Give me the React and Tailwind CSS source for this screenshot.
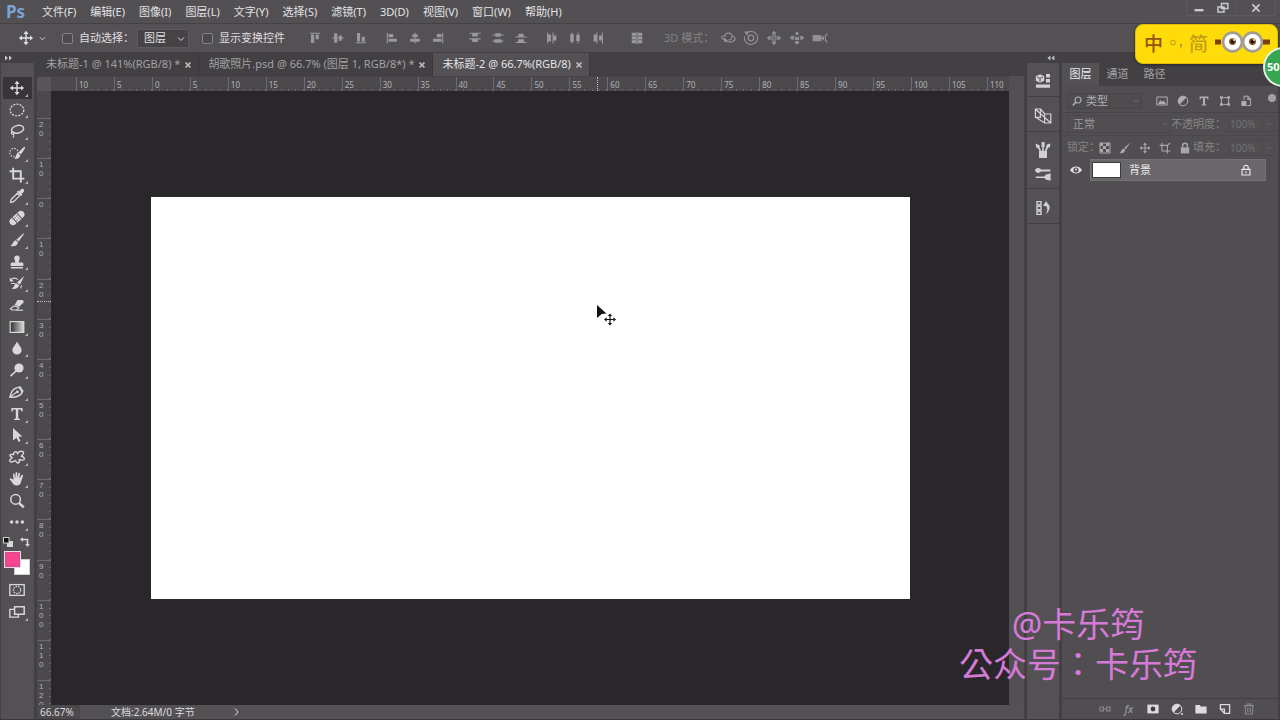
import React from "react";

const font = "font-['Noto_Sans','Noto_Sans_CJK_SC',sans-serif]";

function Svg({ className = "size-4", box = "0 0 16 16", children }) {
  return (
    <svg viewBox={box} className={"shrink-0 " + className} fill="currentColor" aria-hidden="true">
      {children}
    </svg>
  );
}

function Line({ d, w = 1.2, dash }) {
  return <path d={d} fill="none" stroke="currentColor" strokeWidth={w} strokeDasharray={dash} strokeLinecap="butt" />;
}

function MoveGlyph() {
  return (
    <>
      <path d="M8 .8 10.6 4H5.4zM8 15.2 5.4 12h5.2zM.8 8 4 5.4v5.2zM15.2 8 12 10.6V5.4z" />
      <path d="M7.3 3h1.4v10H7.3zM3 7.3h10v1.4H3z" />
    </>
  );
}

function Chevron({ className = "size-2" }) {
  return (
    <Svg className={className} box="0 0 8 8">
      <Line d="M1 2.5 4 5.5 7 2.5" w={1} />
    </Svg>
  );
}

const tools = [
  ["移动工具", <MoveGlyph />],
  ["椭圆选框工具", <ellipse cx="8" cy="8" rx="6.8" ry="5.8" fill="none" stroke="currentColor" strokeWidth="1.3" strokeDasharray="2 1.2" />],
  ["套索工具", <>
    <ellipse cx="8.6" cy="6.3" rx="6.2" ry="3.8" transform="rotate(-14 8.6 6.3)" fill="none" stroke="currentColor" strokeWidth="1.4" />
    <Line d="M3.5 9C1.8 9 2 11.4 4 11.2S5.8 8.6 4 8.8M4 11C5.5 12.5 4.5 14 3.8 14.6" w={1.1} />
  </>],
  ["快速选择工具", <>
    <circle cx="5" cy="7.6" r="4.2" fill="none" stroke="currentColor" strokeWidth="1.1" strokeDasharray="1.6 1.2" />
    <path d="M15.4 1.6 16.2 3.2 11.8 9.6 9.4 7.6zM8.8 8l2.6 2.2c-.6 3-3.4 4-6.2 3.6 2-.9 1.4-4.4 3.6-5.8z" />
  </>],
  ["裁剪工具", <Line d="M4.2.8V11.6H15.4M.6 4.2H11.8V15.4" w={1.9} />],
  ["吸管工具", <>
    <path d="M10 3.4 12.2 1.2C14-.3 16.2 2 14.8 3.8L12.6 6l.9.9-1.2 1.2L7.9 3.7l1.2-1.2z" />
    <path d="M8.4 5.2 10.8 7.6 4.6 13.6 2 14.6 1.4 14 2.4 11.2z" fill="none" stroke="currentColor" strokeWidth="1.3" />
  </>],
  ["污点修复画笔工具", <g transform="rotate(-42 8 8)">
    <path d="M2.8 4.4h1.6v7.2H2.8A3.6 3.6 0 0 1 2.8 4.4zM13.2 4.4h-1.6v7.2h1.6a3.6 3.6 0 0 0 0-7.2zM5 4.4h6v7.2H5z" />
    <path d="M6.2 6h1v1h-1zM8.8 6h1v1h-1zM6.2 9h1v1h-1zM8.8 9h1v1h-1z" fill="#535154" />
    <path d="M4.6 4.4h.6v7.2h-.6zM10.8 4.4h.6v7.2h-.6z" fill="#535154" />
  </g>],
  ["画笔工具", <path d="M14.6 1.2 15 2 9.6 9.6 7.3 7.7zM6.6 8.3 9 10.3c-.4 3.2-3.7 4.6-7.6 3.6C4 12.9 3.4 9.4 6.6 8.3z" />],
  ["仿制图章工具", <path d="M8 1.4a2.8 2.8 0 0 1 2.4 4.2L9.6 8.4h3.8l1 1V12H1.6V9.4l1-1h3.8l-.8-2.8A2.8 2.8 0 0 1 8 1.4zM2 13h12v1.4H2z" />],
  ["历史记录画笔工具", <>
    <path d="M15.2 1 11 9.8 8 7.6zM7.4 8.2l2.8 2c-.8 2.8-3.6 4.4-7.4 3.6C5.2 12.6 5 9 7.4 8.2z" />
    <Line d="M1.4 5.4C3.4 2.6 6.6 2.4 9 4.6M2.2 8.5H6.4M12.6 10.4 11.8 13.4" w={1.1} />
    <path d="M.8 2.6v4h4z" />
  </>],
  ["橡皮擦工具", <>
    <path d="M8.6 3 13.6 3 15 5 10.6 9.6 5.6 8z" />
    <path d="M5 8.8 9.8 10.4 7.8 13H3L1.4 11.8z" fill="none" stroke="currentColor" strokeWidth="1.2" />
    <Line d="M7.6 13.2H14" w={1.2} />
  </>],
  ["渐变工具", <>
    <defs><linearGradient id="toolGradient"><stop stopColor="#2c2b2d" /><stop offset="1" stopColor="#dddddd" /></linearGradient></defs>
    <rect x="1.2" y="2.6" width="13.6" height="10.8" fill="url(#toolGradient)" stroke="currentColor" strokeWidth="1.2" />
  </>],
  ["模糊工具", <path d="M8 1.6C9.6 5 12.6 7.2 12.6 10.2a4.6 4.4 0 0 1-9.2 0C3.4 7.2 6.6 5 8 1.6z" />],
  ["减淡工具", <><circle cx="10" cy="6" r="4.6" /><Line d="M7 9 1.6 14.2" w={1.7} /></>],
  ["钢笔工具", <g transform="rotate(8 8 8)">
    <path d="M1.6 14C1.8 8.6 4.6 3.8 10.4 2.6L13.6 6.2C12.6 11.6 7 14 1.6 14z" fill="none" stroke="currentColor" strokeWidth="1.5" />
    <Line d="M2 13.6 7.6 8.4M9.2 3.2 13 7.2" /><circle cx="8.4" cy="7.8" r="1.4" />
  </g>],
  ["横排文字工具", <path d="M2.4 2h11.2v3.4h-1.2L11.8 3.6H9.2v8.8l1.8.6V14H5v-1l1.8-.6V3.6H4.2L3.6 5.4H2.4z" />],
  ["路径选择工具", <path d="M4 1 13.4 9.4 9.4 9.8 11.6 14 9.6 15 7.6 10.8 4 13.6z" />],
  ["自定形状工具", <path d="M4.6 5.6C4.2 2.6 7.4 1.8 8.6 4.4 10 2 14.6 1.2 14.6 4 14.6 5.8 12.6 6 12.4 7.2c2.4.4 3.4 2.4 2.6 3.4-1.2 1.4-3.2-.2-4.8.2.6 1.8-.2 3.4-1.6 3.2-1.2-.2-1.4-2-2.4-2.4-1.4.8-4.6 2.2-5.4.6-.8-1.8 2-2.4 2.4-3.6C2 8 .6 7.2 1 6c.6-1.4 2.6-.2 3.6-.4z" fill="none" stroke="currentColor" strokeWidth="1.4" />],
  ["抓手工具", <path d="M4.6 8.4 4 3.6c-.2-1.2 1.4-1.4 1.6-.2L6.4 7 6.6 1.8c0-1.2 1.6-1.2 1.6 0L8.4 7l.9-4.6c.2-1.1 1.7-.9 1.6.3L10.5 7.4l2-3.2c.6-.9 1.9-.3 1.5.7L12.2 10.6c-.6 2.8-1.8 4-4.4 4-2.8 0-3.8-1.6-5-3.6L.8 8.6c-.6-1.2.8-1.8 1.6-.9z" />],
  ["缩放工具", <><circle cx="6.6" cy="6.4" r="4.8" fill="none" stroke="currentColor" strokeWidth="1.5" /><Line d="M10 10 14.8 14.4" w={2.4} /></>],
  ["编辑工具栏", <><circle cx="2.6" cy="8" r="1.7" /><circle cx="8" cy="8" r="1.7" /><circle cx="13.4" cy="8" r="1.7" /></>],
];
const noFlyout = ["橡皮擦工具", "缩放工具"];

function Corner() {
  return <span className="absolute right-1 bottom-0.5 size-0 border-l-3 border-b-3 border-l-transparent border-b-[#b5b3b6]" />;
}

function Toolbox() {
  return (
    <aside className="flex w-[37px] shrink-0 flex-col border-r-3 border-l border-[#424043] bg-[#424043]">
      <div className="flex h-[10px] items-center pl-1 text-[#c8c6c9]">
        <Svg className="h-1.5 w-2" box="0 0 8 6"><path d="M0 0.6 3 3 0 5.4zM4 .6 7 3 4 5.4z" /></Svg>
      </div>
      <div className="flex flex-1 flex-col bg-[#535154] pt-[14px] text-[#d9d7da]">
        <div className="flex h-[456px] flex-col">
          {tools.map(([name, art], i) => (
            <button
              key={name}
              aria-label={name}
              className={
                "relative mx-[2px] flex flex-1 items-center justify-center pr-px " +
                (i === 0 ? "bg-[#373538]" : "")
              }
            >
              <Svg>{art}</Svg>
              {!noFlyout.includes(name) && <Corner />}
            </button>
          ))}
        </div>
        <div className="flex h-[18px] items-center justify-between pr-1 pl-0.5">
          <button aria-label="默认前景色和背景色">
            <Svg className="size-2.5" box="0 0 10 10">
              <path d="M4 4h6v6H4z" /><rect x=".5" y=".5" width="5.5" height="5.5" fill="#111" stroke="#ccc" strokeWidth="1" />
            </Svg>
          </button>
          <button aria-label="切换前景色和背景色">
            <Svg className="size-2.5" box="0 0 10 10">
              <Line d="M2.5 2.5H7.5V7.5" w={1.6} /><path d="M0 2.5 3 .2v4.6zM7.5 10 5.2 7h4.6z" />
            </Svg>
          </button>
        </div>
        <div className="relative ml-[3px] h-6 w-[26px]">
          <button aria-label="背景色" className="absolute right-0 bottom-0 size-4 border border-[#cfcdd0] bg-white" />
          <button aria-label="前景色" className="absolute top-0 left-0 size-[17px] border border-[#efdce6] bg-[#f5468f] outline-1 -outline-offset-2 outline-[#d84c8a]" />
        </div>
        <button aria-label="以快速蒙版模式编辑" className="mt-1 flex h-[22px] items-center justify-center pr-px">
          <Svg>
            <rect x=".8" y="2.6" width="14.4" height="10.8" fill="none" stroke="currentColor" strokeWidth="1.3" />
            <circle cx="8" cy="8" r="3.6" fill="none" stroke="currentColor" strokeWidth="1.2" strokeDasharray="1.6 .9" />
          </Svg>
        </button>
        <button aria-label="更改屏幕模式" className="relative mx-[2px] flex h-[22px] items-center justify-center pr-px">
          <Svg>
            <path d="M.8 5.4h8.6v7.8H.8z" fill="none" stroke="currentColor" strokeWidth="1.3" />
            <path d="M5.6 2.8h9.6v7.4H5.6z" fill="#535154" stroke="currentColor" strokeWidth="1.5" />
          </Svg>
          <Corner />
        </button>
      </div>
    </aside>
  );
}

const menus = ["文件(F)", "编辑(E)", "图像(I)", "图层(L)", "文字(Y)", "选择(S)", "滤镜(T)", "3D(D)", "视图(V)", "窗口(W)", "帮助(H)"];

function MenuBar() {
  return (
    <header className="flex h-6 shrink-0 items-center border-b border-[#444245] bg-[#525053] pl-[6px]">
      <span className="w-9 text-[17px] leading-6 font-bold text-[#7ba3d4]">Ps</span>
      <nav className="flex flex-1 gap-[14px]">
        {menus.map((m) => (
          <button key={m} className="text-[11px] leading-4 whitespace-nowrap text-[#e4e2e5]">{m}</button>
        ))}
      </nav>
      <div className="mr-1 flex h-4 items-center self-start border border-t-0 border-[#5c5a5d] text-[#c9c7ca]">
        <button aria-label="最小化" className="flex w-6 justify-center pt-1"><Svg className="size-3" box="0 0 12 12"><path d="M1.5 5h9v2.4h-9z" /></Svg></button>
        <button aria-label="还原" className="flex w-6 justify-center"><Svg className="size-3" box="0 0 12 12"><path d="M4.5 1.5h6.4v5H4.5zM1 5h6v5H1z" fill="none" stroke="currentColor" strokeWidth="1.5" /></Svg></button>
        <button aria-label="关闭" className="flex w-10 justify-center border-l border-[#5c5a5d]"><Svg className="size-3" box="0 0 12 12"><Line d="M2.4 2.4 9.6 9.6M9.6 2.4 2.4 9.6" w={1.8} /></Svg></button>
      </div>
    </header>
  );
}

const alignGroups = [
  [
    ["顶对齐", <path d="M2 2h12v1.2H2zM3.4 4h3.6v9.6H3.4zM8.8 4h3.6v5.4H8.8z" />],
    ["垂直居中对齐", <path d="M1.4 7.4h13.2v1.2H1.4zM3.6 2.6h3.6v10.8H3.6zM9 5h3.4v6H9z" />],
    ["底对齐", <path d="M2 12.8h12V14H2zM3.4 2.4h3.6V12H3.4zM8.8 6.6h3.6V12H8.8z" />],
  ],
  [
    ["左对齐", <path d="M2 2h1.2v12H2zM4 3.4h5.4V7H4zM4 8.8h9.6v3.6H4z" />],
    ["水平居中对齐", <path d="M7.4 1.6h1.2v12.8H7.4zM5 3.6h6V7H5zM2.6 8.8h10.8v3.6H2.6z" />],
    ["右对齐", <path d="M12.8 2H14v12h-1.2zM6.6 3.4H12V7H6.6zM2.4 8.8H12v3.6H2.4z" />],
  ],
  [
    ["按顶分布", <path d="M1.6 2h12.8v1.2H1.6zM4.8 3.2h6.4v3H4.8zM1.6 8.4h12.8v1.2H1.6zM4.8 9.6h6.4v3H4.8z" />],
    ["垂直居中分布", <path d="M1.6 4h12.8v1.2H1.6zM5 2.6h6v4H5zM1.6 10.8h12.8V12H1.6zM4 9.4h8v4H4z" />],
    ["按底分布", <path d="M1.6 6.2h12.8v1.2H1.6zM5 3.2h6v3H5zM1.6 12.6h12.8v1.2H1.6zM4.6 9.4h6.8v3.2H4.6z" />],
  ],
  [
    ["按左分布", <path d="M2.4 1.8h1.2v12.4H2.4zM3.6 4h3.2v8H3.6zM8.6 1.8h1.2v12.4H8.6zM9.8 5.2H13v5.6H9.8z" />],
    ["水平居中分布", <path d="M4 1.8h1.2v12.4H4zM2.6 3.8h4v8.4h-4zM10.8 1.8H12v12.4h-1.2zM9.4 4.6h4v6.8h-4z" />],
    ["按右分布", <path d="M6.2 1.8h1.2v12.4H6.2zM3 4h3.2v8H3zM12.4 1.8h1.2v12.4h-1.2zM9.2 5.2h3.2v5.6H9.2z" />],
  ],
];

const modes3d = [
  ["环绕移动 3D 相机", <>
    <Line d="M4.6 9.6C2 9 .6 7.2 2.6 6.2 4 5.6 5 6 5 6 5 2.4 12 1.8 12 6c0 2-1.4 4-3.4 4.2M12 6c4 .4 4 4.6.4 5.6C9 12.4 6 12 4.4 10" />
    <path d="M4 7.6v4.6L8 10.6z" />
  </>],
  ["滚动 3D 相机", <>
    <circle cx="8" cy="8" r="2.8" fill="none" stroke="currentColor" strokeWidth="1.3" />
    <Line d="M4.4 2.4A6.6 6.6 0 1 1 1.6 6.4" /><path d="M1 1.4h4.6L4.2 6z" />
  </>],
  ["平移 3D 相机", <>
    <path d="M8 .8 10.4 3.6H5.6zM8 15.2 5.6 12.4h4.8zM.8 8l2.8-2.4v4.8zM15.2 8l-2.8 2.4V5.6z" />
    <Line d="M8 3V13M3 8H13" w={3.2} />
    <Line d="M8 3.6V12.4M3.6 8H12.4" w={1.2} />
    <path d="M7.2 4h1.6v8H7.2zM4 7.2h8v1.6H4z" fill="#6b696c" />
  </>],
  ["滑动 3D 相机", <path d="M8 1.4 10 3.4 8.8 5H7.2L6 3.4zM5.6 6.2l2.4 1L10.4 6.2l-.5 2L10.4 10H5.6l.5-1.8zM.6 7.8 3 5.8h1.8v4H3zM15.4 7.8 13 5.8h-1.8v4H13zM8 14.8 5.6 12.4 6.8 11h2.4l1.2 1.4z" />],
  ["变焦 3D 相机", <><path d="M.6 5h8.8v6.2H.6zM9.4 7.6 12 5.8v4.6L9.4 8.8z" /><Line d="M15.4 3.6 13.4 5.6V10.4L15.4 12.4" /></>],
];

function Rule() {
  return <span className="h-[20px] w-px shrink-0 bg-[#444245]" />;
}

function OptionButton({ name, children, size = "size-[14px]" }) {
  return (
    <button aria-label={name} className="flex w-[23px] shrink-0 items-center justify-center">
      <Svg className={size}>{children}</Svg>
    </button>
  );
}

function AlignGroup({ group }) {
  return (
    <div className="flex">
      {group.map(([n, a]) => <OptionButton key={n} name={n}>{a}</OptionButton>)}
    </div>
  );
}

function Check({ children }) {
  return (
    <label className="flex shrink-0 items-center gap-1.5 whitespace-nowrap">
      <input type="checkbox" className="size-[11px] appearance-none rounded-xs border border-[#858386] bg-[#4b494c] checked:bg-[#9ab8e0]" />
      {children}
    </label>
  );
}

function OptionsBar() {
  return (
    <div className="flex h-[29px] shrink-0 items-center overflow-hidden border-b border-[#403e41] bg-[#535154] text-[11px] text-[#e0dee1]">
      <button aria-label="当前工具" className="mr-2 ml-[18px] flex w-7 items-center justify-between">
        <Svg><MoveGlyph /></Svg>
        <Chevron className="size-[7px]" />
      </button>
      <div className="ml-2"><Check>自动选择：</Check></div>
      <div className="relative ml-1 shrink-0">
        <select aria-label="自动选择" className="block h-[17px] w-[50px] appearance-none bg-[#454346] pl-1.5 text-[11px] leading-4 outline-1 outline-[#5c5a5d]">
          <option>图层</option><option>组</option>
        </select>
        <span className="pointer-events-none absolute top-[5px] right-[3px]"><Chevron /></span>
      </div>
      <div className="mx-[7px]"><Rule /></div>
      <Check>显示变换控件</Check>
      <div className="mr-1.5 ml-3"><Rule /></div>
      <div className="flex shrink-0 gap-2 text-[#9b999c]">
        <AlignGroup group={alignGroups[0]} />
        <AlignGroup group={alignGroups[1]} />
      </div>
      <div className="mx-[7px]"><Rule /></div>
      <div className="flex shrink-0 gap-2 text-[#9b999c]">
        <AlignGroup group={alignGroups[2]} />
        <AlignGroup group={alignGroups[3]} />
      </div>
      <div className="mx-2"><Rule /></div>
      <div className="flex text-[#9b999c]">
        <OptionButton name="自动对齐图层"><path d="M2 2h5v3.4H2zM9 2h5v3.4H9zM2 6.4h5v3.2H2zM9 6.4h5v3.2H9zM2 10.6h5V14H2zM9 10.6h5V14H9zM7.4 1h1.2v14H7.4z" /></OptionButton>
      </div>
      <div className="mx-2"><Rule /></div>
      <span className="w-[52px] shrink-0 whitespace-nowrap text-[#848285]">3D 模式：</span>
      <div className="flex text-[#929093]">
        {modes3d.map(([n, a]) => <OptionButton key={n} name={n} size="size-4">{a}</OptionButton>)}
      </div>
    </div>
  );
}

const docs = [
  { title: "未标题-1 @ 141%(RGB/8) *" },
  { title: "胡歌照片.psd @ 66.7% (图层 1, RGB/8*) *" },
  { title: "未标题-2 @ 66.7%(RGB/8)", active: true },
];

function DocTabs() {
  return (
    <div className="flex h-[23px] shrink-0 bg-[#424043] text-[11px]">
      {docs.map((d) => (
        <div
          key={d.title}
          className={
            "flex items-center gap-1 border-r border-[#39373a] pr-[6px] pl-[9px] whitespace-nowrap " +
            (d.active ? "bg-[#535154] text-[#e6e4e7]" : "text-[#a3a1a4]")
          }
        >
          <button>{d.title}</button>
          <button aria-label="关闭文档" className="text-[#bebcbf]">
            <Svg className="size-2" box="0 0 8 8"><Line d="M1.5 1.5 6.5 6.5M6.5 1.5 1.5 6.5" w={1.7} /></Svg>
          </button>
        </div>
      ))}
    </div>
  );
}

const hMarks = [10, 5, ...Array.from({ length: 23 }, (_, i) => i * 5)];
const vMarks = [20, 10, ...Array.from({ length: 13 }, (_, i) => i * 10)];
const five = [0, 1, 2, 3, 4];

function HorizontalRuler() {
  return (
    <div className="flex h-[15px] shrink-0 overflow-hidden border-t border-[#454346] bg-[#4b494c]">
      <div className="w-[14px] shrink-0 bg-[#575558]" />
      <div className="relative flex min-w-0 flex-1 overflow-hidden pl-[25px]">
        <div className="flex w-[949px] shrink-0">
          {hMarks.map((n, i) => (
            <div key={i} className="flex flex-1 flex-col border-l border-[#6c6a6d]">
              <span className="h-[12px] pl-0.5 text-[8px] leading-[16px] text-[#b4b2b5]">{n}</span>
              <span className="flex h-[2px]">
                {five.map((t) => <i key={t} className="flex-1 border-r border-[#69676a]" />)}
              </span>
            </div>
          ))}
        </div>
        <span className="absolute inset-y-0 left-[546px] border-l border-dotted border-[#c4c2c5]" />
      </div>
    </div>
  );
}

function VerticalRuler() {
  return (
    <div className="relative w-[14px] shrink-0 overflow-hidden bg-[#4b494c]">
      <div className="absolute inset-x-0 top-0 flex flex-col pt-[27px]">
        <div className="flex h-[602px] flex-col">
          {vMarks.map((n, i) => (
            <div key={i} className="flex flex-1 justify-between border-t border-[#6c6a6d]">
              <span className="flex flex-col pt-px pl-0.5 font-['Liberation_Sans',sans-serif] text-[8px] leading-[9px] text-[#b4b2b5]">
                {String(n).split("").map((c, k) => <b key={k} className="font-normal">{c}</b>)}
              </span>
              <span className="flex w-[2px] flex-col">
                {five.map((t) => <i key={t} className="flex-1 border-b border-[#69676a]" />)}
              </span>
            </div>
          ))}
        </div>
      </div>
      <span className="absolute inset-x-0 top-[210px] border-t border-dotted border-[#c4c2c5]" />
    </div>
  );
}

function Document() {
  return (
    <main className="flex min-w-0 flex-1 flex-col bg-[#4b494c]">
      <DocTabs />
      <div className="flex min-h-0 flex-1">
        <div className="flex min-w-0 flex-1 flex-col">
          <HorizontalRuler />
          <div className="flex min-h-0 flex-1">
            <VerticalRuler />
            <div className="flex min-w-0 flex-1 items-center justify-center overflow-hidden bg-[#29272a]">
              <div className="relative h-[402px] w-[759px] shrink-0 bg-white">
                <svg viewBox="0 0 20 22" className="absolute top-[108px] left-[445px] h-[22px] w-5" aria-hidden="true">
                  <path d="M1 0 10.4 8.6 5.8 9 1 13z" fill="#111" />
                  <path d="M14 8.4 16.2 11H11.8zM14 20.6 11.8 18h4.4zM8 14.5l2.6-2.2v4.4zM20 14.5l-2.6 2.2v-4.4zM13.4 10.5h1.2v8h-1.2zM10 13.9h8v1.2h-8z" fill="#111" />
                </svg>
              </div>
            </div>
          </div>
        </div>
        <div className="w-[15px] shrink-0 bg-[#514f52]" />
      </div>
      <footer className="flex h-[14px] shrink-0 items-center bg-[#535154] text-[10px] leading-[14px] text-[#dddbde]">
        <span className="w-[43px] bg-[#4b494c] pl-[3px]">66.67%</span>
        <span className="ml-[31px] w-[117px] whitespace-nowrap">文档:2.64M/0 字节</span>
        <button aria-label="状态栏选项" className="pl-1.5">
          <Svg className="h-2 w-1.5" box="0 0 6 8"><Line d="M1 .5 4 4 1 7.5" w={1} /></Svg>
        </button>
      </footer>
    </main>
  );
}

function StripButton({ name, children }) {
  return (
    <button aria-label={name} className="flex h-6 w-full items-center justify-center">
      <Svg className="size-[18px]" box="0 0 18 18">{children}</Svg>
    </button>
  );
}

function IconStrip() {
  return (
    <div className="flex w-[38px] shrink-0 flex-col border-x-3 border-[#424043] bg-[#424043]">
      <div className="flex h-[10px] items-center justify-end pr-1 text-[#c8c6c9]">
        <Svg className="h-1.5 w-2" box="0 0 8 6"><path d="M3.4.6.4 3l3 2.4zM7.4.6 4.4 3l3 2.4z" /></Svg>
      </div>
      <div className="flex flex-1 flex-col bg-[#535154] text-[#d2d0d3]">
        <div className="border-b border-[#424043] pt-[6px] pb-[3px]">
          <StripButton name="库">
            <path d="M6 2.2 10.2 4.2v4.6L6 10.8 1.8 8.8V4.2z" />
            <path d="M3.2 5 6 6.4 8.8 5M6 6.4v3.4" fill="none" stroke="#535154" strokeWidth="1" />
            <path d="M12 2h4v3.6h-4zM12 7h4v3.6h-4zM2 12.4h14v3.4H2z" />
          </StripButton>
        </div>
        <div className="border-b border-[#424043] pt-[7px] pb-[3px]">
          <StripButton name="仿制源">
            <path d="M1.4 2h5v8.4h-5zM10.6 7h6.2v9h-6.2zM6.4 2 10.8 7M1.6 10.2 10.8 16M1.6 2.2 16.6 15.8" fill="none" stroke="currentColor" strokeWidth="1.2" />
          </StripButton>
        </div>
        <div className="border-b border-[#424043] pt-[6px] pb-[2px]">
          <StripButton name="画笔">
            <path d="M5 10h8v7H5z" />
            <Line d="M6.6 10 4 5.6M9 10V5M11.4 10 13.6 6" w={1.6} />
            <path d="M1.6 2.6 5.8 4.4 5.4 7.2 2.2 6.4zM7.6 1h3v5h-3zM12 6.8 12.8 3.4l3.6-1-.4 3.8z" />
          </StripButton>
          <StripButton name="画笔预设">
            <path d="M1 5.4C2 2.4 5.4 2.6 7 4.6h9.4v1.8H7C5.4 8.4 2 8.2 1 5.4zM1.8 11.4h8.4C12 9 14 9 17 8.6c-.6 1.6-.6 5.4 0 7-3-.4-5-.2-6.8-2.6H1.8z" />
          </StripButton>
        </div>
        <div className="border-b border-[#424043] pt-[7px] pb-[3px]">
          <StripButton name="历史记录">
            <path d="M3 2.6h4v3.2H3zM3 7.4h4v3.2H3zM3 12.2h4v3.2H3z" fill="none" stroke="currentColor" strokeWidth="1.4" />
            <path d="M9 6.8 12.2 2l1.4 2.4c3.4 2.4 2.6 7.6-2 10.6 2-2.8 2.2-6 .8-7.8z" />
          </StripButton>
        </div>
      </div>
    </div>
  );
}

function PanelIcon({ name, children, className = "" }) {
  return (
    <button aria-label={name} className={className}>
      <Svg className="size-3" box="0 0 12 12">{children}</Svg>
    </button>
  );
}

function HalfDisc() {
  return <><circle cx="6" cy="6" r="4.8" fill="none" stroke="currentColor" /><path d="M2.6 9.4 9.4 2.6A4.8 4.8 0 0 0 2.6 9.4z" /></>;
}

function LockGlyph() {
  return <><path d="M1.8 5.4h8.4v6H1.8z" /><Line d="M3.6 5.6V3.6a2.4 2.4 0 0 1 4.8 0V5.6" w={1.4} /></>;
}

function PercentField({ id, label }) {
  return (
    <div className="flex items-center">
      <label htmlFor={id} className="pr-0.5 whitespace-nowrap">{label}</label>
      <input id={id} type="text" defaultValue="100%" className="h-4 w-[35px] border border-[#4a484b] bg-transparent pl-px text-[10px] text-[#737174] outline-none" />
      <button aria-label={label + "滑块"} className="flex h-4 w-3 items-center justify-center border border-l-0 border-[#4a484b] text-[#69676a]">
        <Chevron className="size-[6px]" />
      </button>
    </div>
  );
}

function LayersPanel() {
  return (
    <aside className="flex w-[218px] shrink-0 flex-col border-r-2 border-[#424043] bg-[#424043] pt-[10px] text-[11px]">
      <div className="flex h-[23px] items-stretch">
        <button className="w-[37px] bg-[#535154] text-[#ebe9ec]">图层</button>
        <button className="w-[37px] text-[#a5a3a6]">通道</button>
        <button className="w-[37px] text-[#a5a3a6]">路径</button>
      </div>
      <div className="flex min-h-0 flex-1 flex-col bg-[#504e51]">
        <div className="flex h-[27px] items-center border-b border-[#464447] pt-1 pl-[5px] text-[#b0aeb1]">
          <div className="relative">
            <select aria-label="图层筛选" className="block h-4 w-[75px] appearance-none border border-[#474548] bg-[#4e4c4f] pl-[18px] text-[11px] leading-[14px]">
              <option>类型</option><option>名称</option>
            </select>
            <span className="pointer-events-none absolute top-[3px] left-[5px]">
              <Svg className="size-2.5" box="0 0 10 10"><circle cx="6" cy="4" r="3" fill="none" stroke="currentColor" strokeWidth="1.2" /><Line d="M4 6 .8 9.4" w={1.5} /></Svg>
            </span>
            <span className="pointer-events-none absolute top-[5px] right-[3px] text-[#7d7b7e]"><Chevron className="size-[6px]" /></span>
          </div>
          <div className="ml-[14px] flex flex-1 gap-[9px]">
            <PanelIcon name="像素图层"><path d="M.8 2h10.4v8H.8z" fill="none" stroke="currentColor" /><path d="M2 9 4.4 5 6 7l1.6-1.6L10 9z" /></PanelIcon>
            <PanelIcon name="调整图层"><HalfDisc /></PanelIcon>
            <PanelIcon name="文字图层"><path d="M1.6 1.6h8.8v3h-1L9 3H7v6.6h1.4v1H3.6v-1H5V3H3l-.4 1.6h-1z" /></PanelIcon>
            <PanelIcon name="形状图层"><path d="M2.4 2.6h7.2v6.8H2.4z" fill="none" stroke="currentColor" /><path d="M1 1.2h2.6v2.6H1zM8.4 1.2H11v2.6H8.4zM1 8.2h2.6v2.6H1zM8.4 8.2H11v2.6H8.4z" /></PanelIcon>
            <PanelIcon name="智能对象"><path d="M4 5V1.2h4.4L10.6 4v6.6H7" fill="none" stroke="currentColor" /><path d="M1.4 6h5v5h-5zM7.4 1.2V5h3z" /></PanelIcon>
          </div>
          <button aria-label="打开或关闭图层过滤" className="mr-[2px] mb-[7px] size-2 rounded-full bg-[#a19fa2]" />
        </div>
        <div className="flex h-[23px] items-center justify-between border-b border-[#4a484b] pr-[3px] pl-[5px] text-[#9c9a9d]">
          <div className="relative">
            <select aria-label="混合模式" className="block h-[18px] w-[104px] appearance-none border border-[#4a484b] bg-transparent pl-[5px] text-[11px] leading-4">
              <option>正常</option><option>正片叠底</option>
            </select>
            <span className="pointer-events-none absolute top-[6px] right-[3px] text-[#747275]"><Chevron className="size-[6px]" /></span>
          </div>
          <div className="text-[#858386]"><PercentField id="opacity" label="不透明度：" /></div>
        </div>
        <div className="flex h-[23px] items-center pr-[3px] pl-[5px] text-[#858386]">
          <span className="w-8 whitespace-nowrap">锁定：</span>
          <div className="flex flex-1 gap-2 text-[#aaa8ab]">
            <PanelIcon name="锁定透明像素"><path d="M1 1h10v10H1z" fill="none" stroke="currentColor" /><path d="M1 1h3v3H1zM7 1h3v3H7zM4 4h3v3H4zM1 7h3v3H1zM7 7h3v3H7z" /></PanelIcon>
            <PanelIcon name="锁定图像像素"><path d="M11.4.6 6.6 7.4 5 6zM4.4 6.6l1.8 1.6C6 10.6 3.4 11.6.6 11.2 2.4 10 2 7.6 4.4 6.6z" /></PanelIcon>
            <button aria-label="锁定位置"><Svg className="size-3"><MoveGlyph /></Svg></button>
            <PanelIcon name="防止嵌套"><Line d="M.6 3.4H8.4V11.4M3 1V9H11.4M8.4 3.4 11 1" w={1.1} /></PanelIcon>
            <PanelIcon name="锁定全部"><LockGlyph /></PanelIcon>
          </div>
          <PercentField id="fill" label="填充：" />
        </div>
        <div className="flex min-h-0 flex-1 flex-col">
          <div className="flex h-[22px] pr-[12px]">
            <button aria-label="图层可见性" className="flex w-[28px] items-center justify-center text-[#e4e2e5]">
              <Svg className="h-[10px] w-3" box="0 0 12 10">
                <path d="M0 5C3 .4 9 .4 12 5 9 9.6 3 9.6 0 5z" /><circle cx="6" cy="5" r="2.6" fill="#504e51" /><circle cx="6" cy="4.6" r="1" />
              </Svg>
            </button>
            <button className="flex flex-1 items-center border border-[#737174] bg-[#69676a] px-px text-[#eeecef]">
              <span className="h-4 w-[29px] border border-[#3d3b3e] bg-white" />
              <span className="ml-2 flex-1 text-left">背景</span>
              <Svg className="mr-3 size-3" box="0 0 12 12">
                <path d="M2 5.4h8v5.6H2z" fill="none" stroke="currentColor" strokeWidth="1.1" />
                <Line d="M3.8 5.4V3.4a2.2 2.2 0 0 1 4.4 0V5.4M6 7.2V9.2" w={1.1} />
              </Svg>
            </button>
          </div>
        </div>
        <div className="flex h-[21px] items-center gap-3 border-t border-[#403e41] pl-[37px] text-[#dddbde]">
          <PanelIcon name="链接图层" className="text-[#8c8a8d]"><path d="M1 4h3.4v4H1zM7.6 4H11v4H7.6zM3.6 6h5" fill="none" stroke="currentColor" strokeWidth="1.1" /></PanelIcon>
          <button aria-label="添加图层样式" className="w-3 text-[11px] leading-3 text-[#a3a1a4] italic">fx</button>
          <PanelIcon name="添加图层蒙版"><path d="M.4 1.6h11.2v8.8H.4z" /><circle cx="6" cy="6" r="2.4" fill="#403e41" /></PanelIcon>
          <PanelIcon name="新建调整图层"><HalfDisc /><circle cx="11" cy="11" r="1" /></PanelIcon>
          <PanelIcon name="新建组"><path d="M.4 2h4.4l1 1.4h5.8V10.4H.4z" /></PanelIcon>
          <PanelIcon name="新建图层"><path d="M1.4 1.6h9.2v8.8H5.4V6.2h-4zM1.6 6.4 5.4 10.2" fill="none" stroke="currentColor" strokeWidth="1.3" /></PanelIcon>
          <PanelIcon name="删除图层" className="text-[#8c8a8d]"><path d="M1 2.6h10M4.4 2.4V1h3.2v1.4M2.4 3v8h7.2V3M4.8 4.4v5M7.2 4.4v5" fill="none" stroke="currentColor" strokeWidth="1.1" /></PanelIcon>
        </div>
      </div>
    </aside>
  );
}

function InputMethodBar() {
  return (
    <div className="absolute top-6 right-[2px] flex h-10 w-[143px] items-center rounded-lg border border-[#e2bd08] bg-[#ffdb0a] pl-2 shadow-[0_1px_3px_#29272a]">
      <button className="w-[26px] text-left text-[19px] leading-[30px] font-medium text-[#985010]">中</button>
      <button aria-label="标点" className="mr-[3px] w-4">
        <Svg className="h-2.5 w-4 text-[#b6971f]" box="0 0 16 10">
          <circle cx="3" cy="3.6" r="2.4" fill="none" stroke="currentColor" /><path d="M10 5h2v2l-1.4 2.6h-.8L10.6 7H10z" />
        </Svg>
      </button>
      <button className="w-[26px] text-left text-[19px] leading-[30px] font-medium text-[#c29d17]">简</button>
      <svg viewBox="0 0 56 24" className="mb-1 h-6 w-14 shrink-0" aria-hidden="true">
        <path d="M0 9.6h6v4.8H0zM48 9.6h7v4.8h-7z" fill="#7c3f0c" />
        <g fill="#fff" stroke="#a29c91" strokeWidth="2.6"><circle cx="17.5" cy="12" r="9.4" /><circle cx="37.5" cy="12" r="9.4" /></g>
        <circle cx="17.5" cy="11.6" r="3.4" fill="#7a471c" /><circle cx="37.5" cy="11.6" r="3.4" fill="#7a471c" />
        <circle cx="17.5" cy="11.6" r="1.7" fill="#180c04" /><circle cx="37.5" cy="11.6" r="1.7" fill="#180c04" />
        <circle cx="19" cy="10" r=".9" fill="#fff" /><circle cx="39" cy="10" r=".9" fill="#fff" />
      </svg>
    </div>
  );
}

export default function App() {
  return (
    <div className={"relative flex h-screen flex-col overflow-hidden border-b border-[#39373a] bg-[#535154] " + font}>
      <MenuBar />
      <OptionsBar />
      <div className="flex min-h-0 flex-1">
        <Toolbox />
        <Document />
        <IconStrip />
        <LayersPanel />
      </div>
      <InputMethodBar />
      <div className="absolute top-[47px] -right-[23px] flex size-10 items-center rounded-full border-2 border-[#e2efe3] bg-[#36a651] pl-[2px] text-[11px] font-bold text-white">50</div>
      <div className="pointer-events-none absolute right-[83px] bottom-[35px] text-center font-['Noto_Sans','Noto_Sans_CJK_TC',sans-serif] text-[34px] leading-10 text-[#d67ad8]">
        <p>@卡乐筠</p>
        <p>公众号：卡乐筠</p>
      </div>
    </div>
  );
}
